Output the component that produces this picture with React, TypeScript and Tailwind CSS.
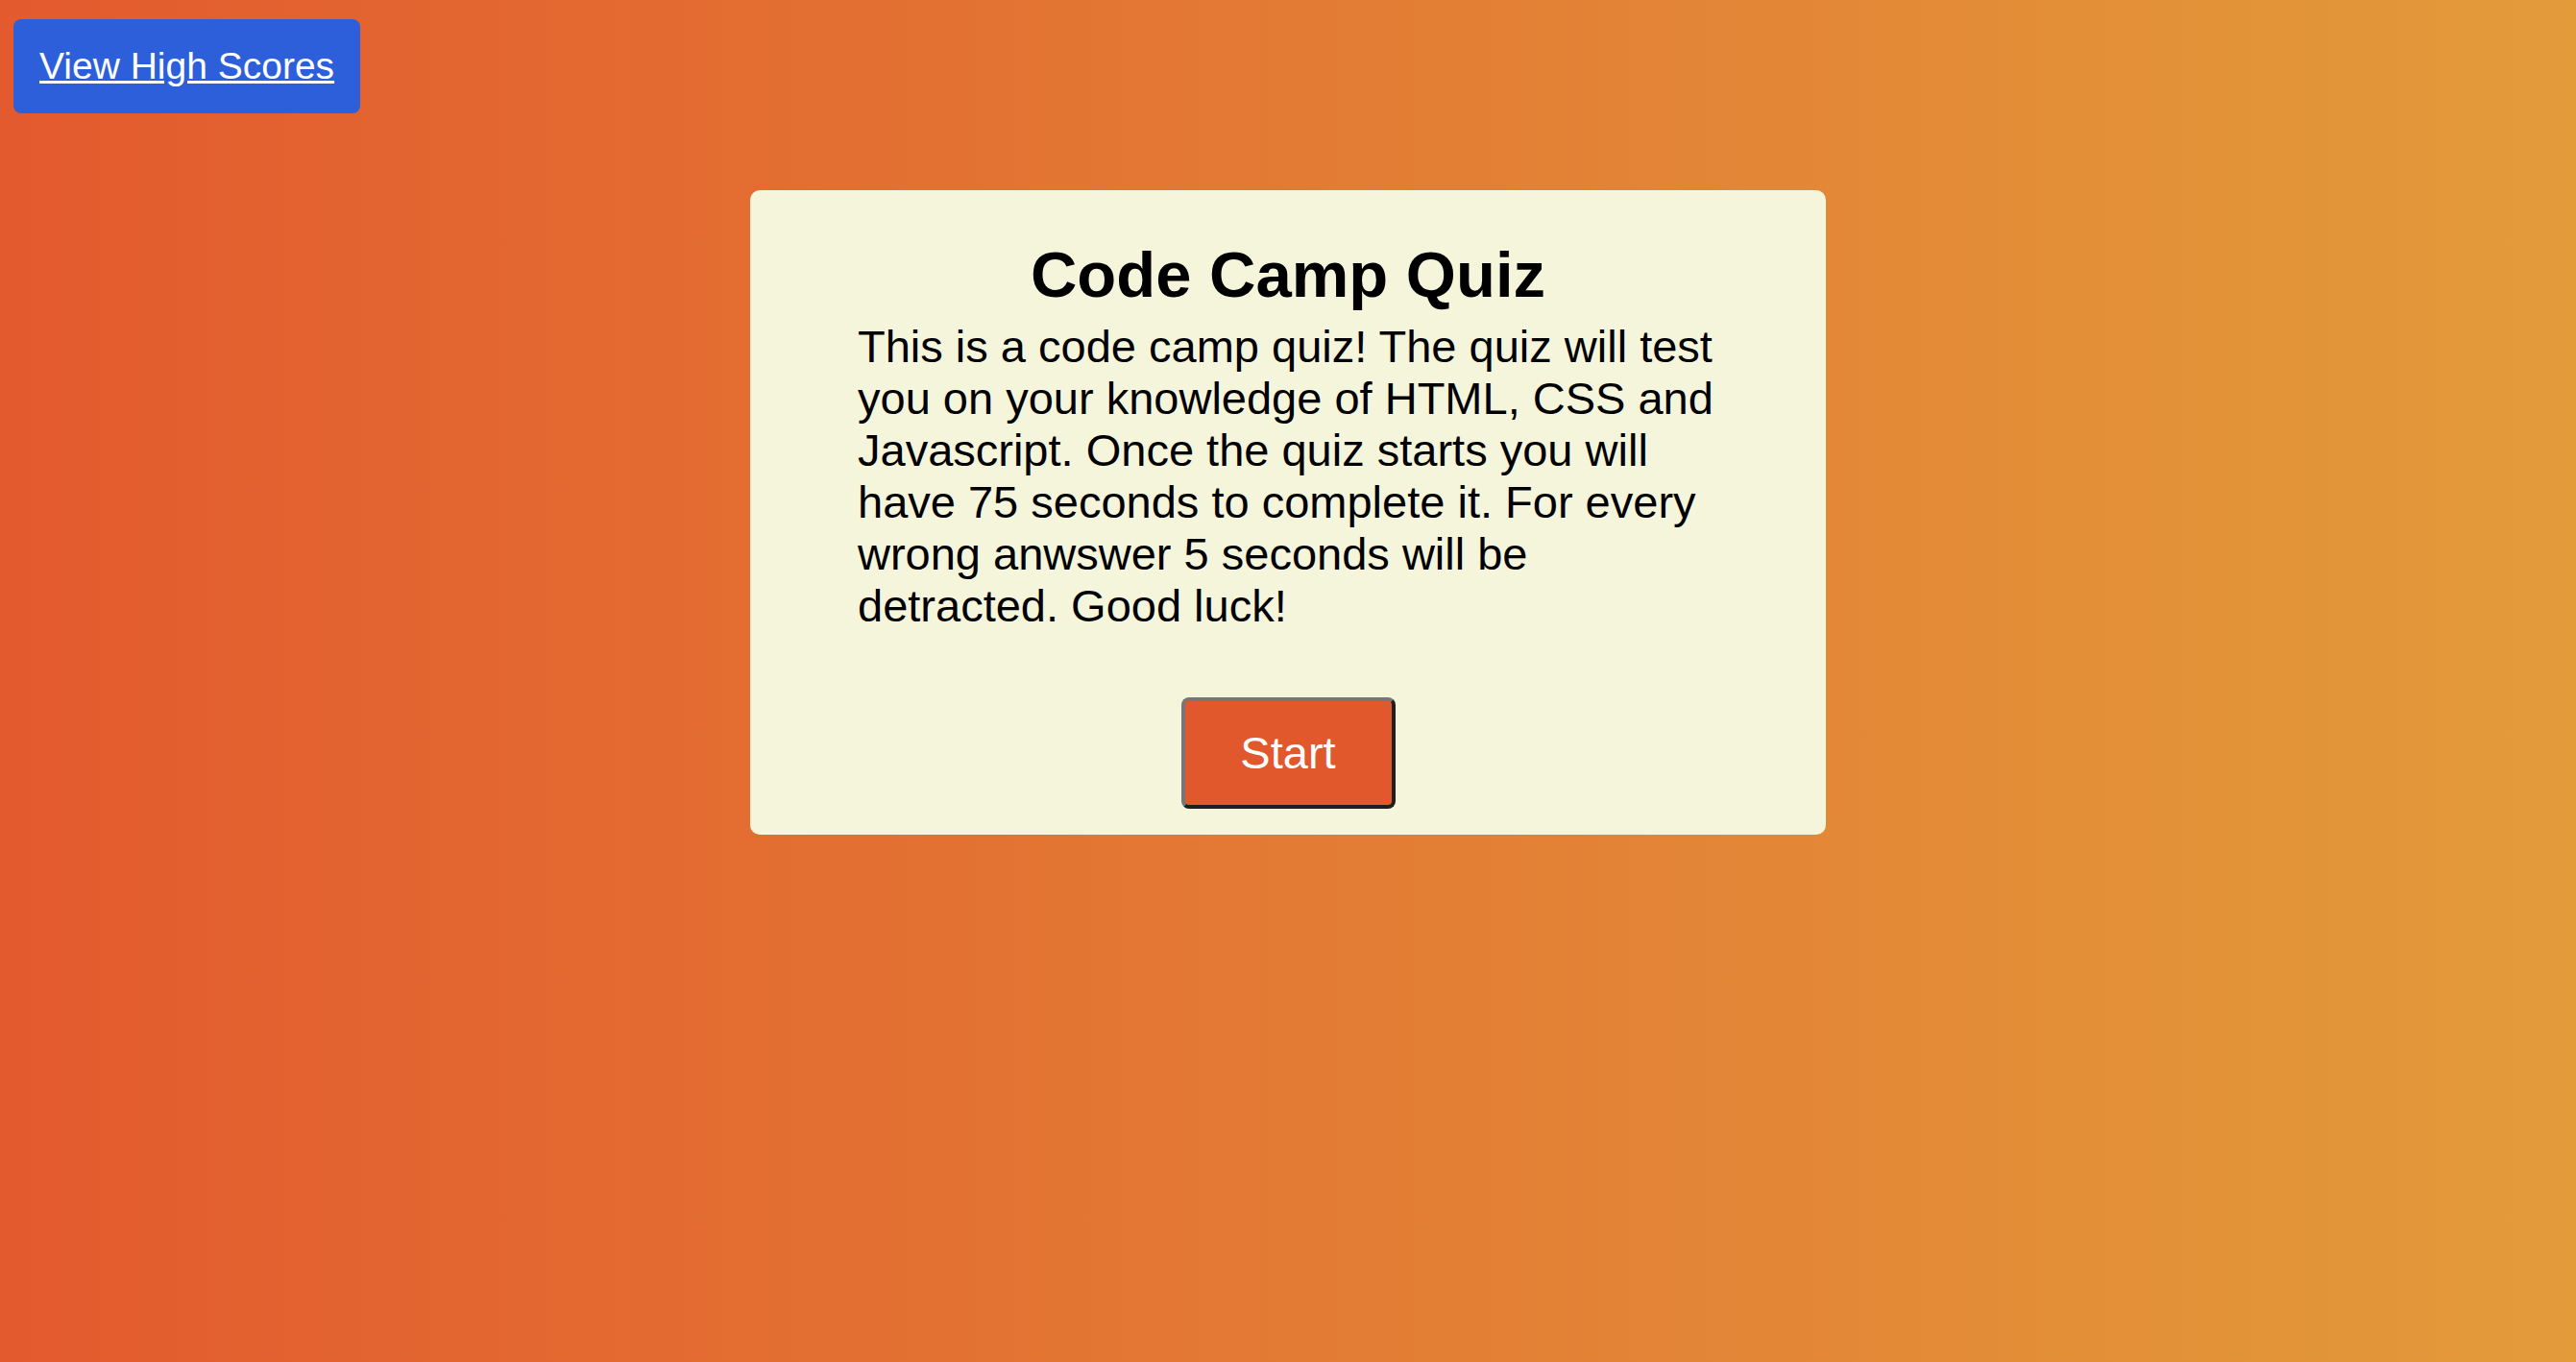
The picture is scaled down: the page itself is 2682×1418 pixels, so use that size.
export default function App() {
  return (
    <div className="min-h-screen bg-linear-to-r/srgb from-[#e35a2e] to-[#e39b3a] pt-[20px] font-['Liberation_Sans',Arial,sans-serif]">
      <div className="pl-[14px]">
        <a
          href="#"
          className="inline-block rounded-[8px] bg-[#2d5fdb] px-[27px] py-[26px] text-[39px] leading-[46px] text-white underline"
        >
          View High Scores
        </a>
      </div>

      <main className="mx-auto mt-[80px] w-[1120px] rounded-[10px] bg-[#f5f5dc] pt-[50px] pb-[27px]">
        <h1 className="text-center text-[67px] leading-[76px] font-bold text-black">Code Camp Quiz</h1>
        <p className="mx-auto mt-[10px] w-[896px] text-[47px] leading-[54px] text-black">
          This is a code camp quiz! The quiz will test you on your knowledge of HTML, CSS and Javascript. Once the quiz
          starts you will have 75 seconds to complete it. For every wrong anwswer 5 seconds will be detracted. Good
          luck!
        </p>
        <div className="mt-[68px] flex justify-center">
          <button className="h-[116px] w-[223px] rounded-[8px] border-4 border-t-[#767676] border-l-[#767676] border-r-[#1f1f1f] border-b-[#1f1f1f] bg-[#e2582d] text-[47px] text-white">
            Start
          </button>
        </div>
      </main>
    </div>
  );
}
